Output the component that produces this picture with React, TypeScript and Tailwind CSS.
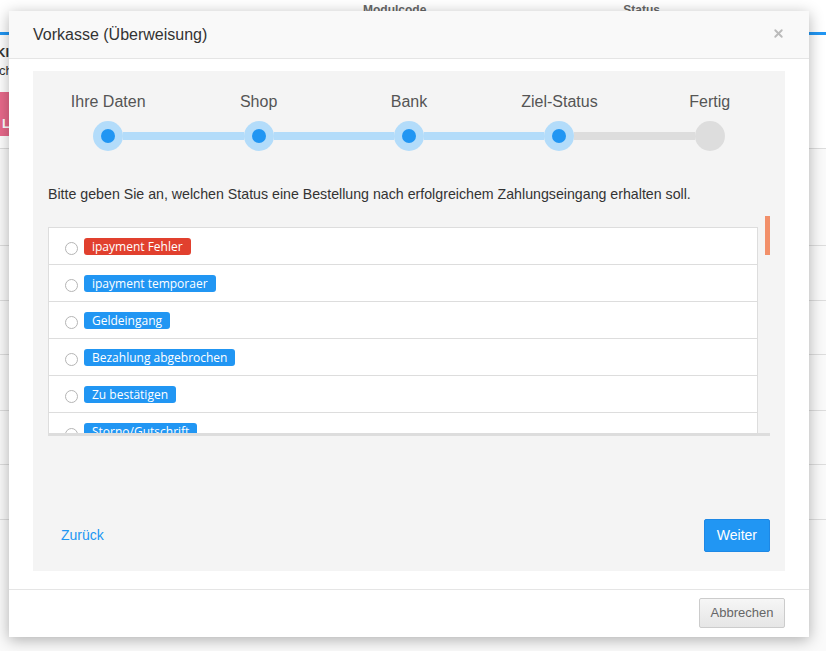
import { X } from "lucide-react";

const steps = ["Ihre Daten", "Shop", "Bank", "Ziel-Status", "Fertig"];
const current = 3;

const statuses: { label: string; color: string }[] = [
  { label: "ipayment Fehler", color: "bg-[#e1402e]" },
  { label: "ipayment temporaer", color: "bg-[#2196f3]" },
  { label: "Geldeingang", color: "bg-[#2196f3]" },
  { label: "Bezahlung abgebrochen", color: "bg-[#2196f3]" },
  { label: "Zu bestätigen", color: "bg-[#2196f3]" },
  { label: "Storno/Gutschrift", color: "bg-[#2196f3]" },
];

function Stepper() {
  return (
    <div className="-mx-[15px] grid grid-cols-5 pt-[22px]">
      {steps.map((s, i) => {
        const done = i <= current;
        const leftOn = i > 0;
        const leftBlue = i <= current;
        const rightOn = i < steps.length - 1;
        const rightBlue = i < current;
        return (
          <div key={s} className="flex flex-col items-center">
            <div className="h-[18px] text-[16px] leading-[18px] text-[#555]">{s}</div>
            <div className="mt-[10px] flex w-full items-center">
              <div
                className={`h-[8px] flex-1 ${
                  !leftOn ? "bg-transparent" : leftBlue ? "bg-[#b3dcfa]" : "bg-[#dddddd]"
                }`}
              />
              <div
                className={`flex h-[30px] w-[30px] items-center justify-center rounded-full ${
                  done ? "bg-[#b3dcfa]" : "bg-[#dddddd]"
                }`}
              >
                {done && <div className="h-[14px] w-[14px] rounded-full bg-[#2196f3]" />}
              </div>
              <div
                className={`h-[8px] flex-1 ${
                  !rightOn ? "bg-transparent" : rightBlue ? "bg-[#b3dcfa]" : "bg-[#dddddd]"
                }`}
              />
            </div>
          </div>
        );
      })}
    </div>
  );
}

function StatusList() {
  return (
    <div className="relative mt-[14px] h-[220px] overflow-hidden border-b-[3px] border-[#dddddd]">
      <div className="mt-[11px] w-[710px] border border-[#dddddd] bg-white">
        {statuses.map((s) => (
          <div key={s.label} className="flex h-[37px] items-center border-b border-[#dddddd] pl-[16px] last:border-b-0">
            <span className="mt-[5px] h-[13px] w-[13px] rounded-full border border-[#b5b5b5] bg-white" />
            <span
              className={`ml-[6px] rounded-[3px] px-[8px] font-['Open_Sans',sans-serif] text-[12px] leading-[17px] text-white ${s.color}`}
            >
              {s.label}
            </span>
          </div>
        ))}
      </div>
      <div className="absolute right-0 top-0 h-[39px] w-[5px] bg-[#f2906a]" />
    </div>
  );
}

function Modal() {
  return (
    <div className="absolute left-[9px] top-[11px] flex w-[800px] flex-col bg-white shadow-[0_3px_14px_rgba(0,0,0,0.3)]">
      <div className="flex h-[48px] items-center justify-between border-b border-[#e5e5e5] bg-[#f9f9f9] pl-[24px] pr-[24px]">
        <span className="text-[16px] text-[#333]">Vorkasse (Überweisung)</span>
        <X className="-mt-[2px] h-[13px] w-[13px] text-[#bbbbbb]" strokeWidth={3.5} />
      </div>
      <div className="px-[24px] pb-[18px] pt-[12px]">
        <div className="bg-[#f4f4f4] px-[15px] pb-[19px]">
          <Stepper />
          <p className="mt-[35px] text-[14.2px] leading-[16px] text-[#333]">
            Bitte geben Sie an, welchen Status eine Bestellung nach erfolgreichem Zahlungseingang erhalten soll.
          </p>
          <StatusList />
          <div className="mt-[83px] flex items-center justify-between">
            <a className="pl-[13px] text-[14px] text-[#2196f3]">Zurück</a>
            <button className="h-[33px] rounded-[2px] border border-[#1e88e5] bg-[#2196f3] px-[12px] text-[14px] text-white">
              Weiter
            </button>
          </div>
        </div>
      </div>
      <div className="flex h-[48px] items-start justify-end border-t border-[#e5e5e5] px-[24px] pt-[8px]">
        <button className="h-[30px] w-[86px] rounded-[2px] border border-[#cccccc] bg-gradient-to-b from-[#f6f6f6] to-[#e6e6e6] text-[13px] text-[#666]">
          Abbrechen
        </button>
      </div>
    </div>
  );
}

export default function App() {
  const rows = [97, 55, 54, 56, 54, 55, 132];
  return (
    <div className="relative h-[651px] w-full overflow-hidden bg-white font-['Liberation_Sans',Arial,sans-serif]">
      <div className="flex h-[20px] items-center text-[12px] font-bold text-[#666]">
        <span className="ml-[363px]">Modulcode</span>
        <span className="ml-[197px]">Status</span>
      </div>
      <div className="mt-[12px] h-[3px] bg-[#2196f3]" />
      <div className="pt-[9px] text-[13px] leading-[18px] text-[#333]">
        <div className="-ml-[4px] font-bold">Klarna</div>
        <div className="-ml-[1px]">checkout</div>
      </div>
      <div className="mt-[12px] flex h-[44px] w-[90px] items-end bg-[#e8698b] pb-[2px] pl-[2px] text-[13px] font-bold text-white">
        <span className="pb-[1px]">Lesen</span>
      </div>
      <div className="mt-[12px] flex flex-col">
        {rows.map((h, i) => (
          <div key={i} style={{ height: h }} className="border-t border-[#dddddd] bg-[#fafafa]" />
        ))}
      </div>
      <Modal />
    </div>
  );
}
